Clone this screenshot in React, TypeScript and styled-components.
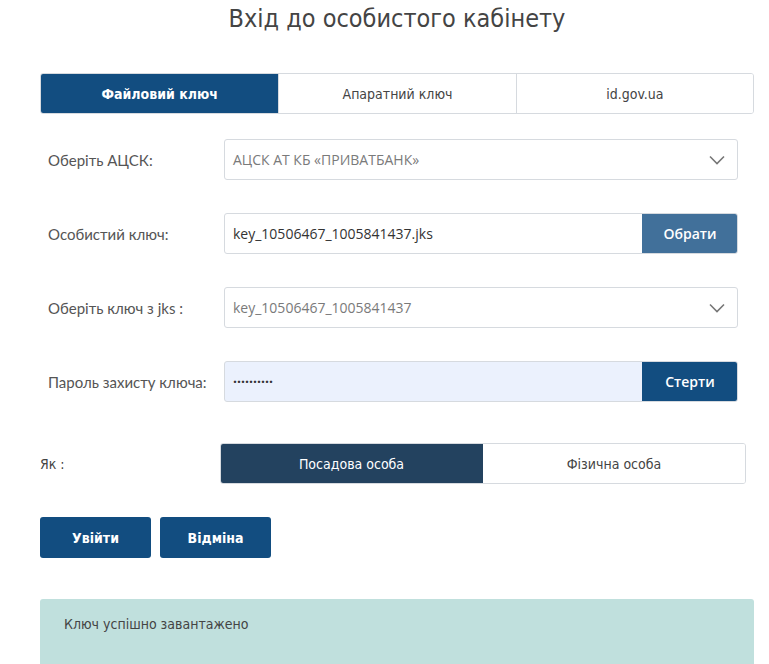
import React, { useState } from "react";
import styled, { createGlobalStyle } from "styled-components";

const condensed = `"Liberation Sans Narrow", "DejaVu Sans Condensed", "DejaVu Sans", sans-serif`;
const labelFont = `Lato, "Noto Sans", sans-serif`;
const inputFont = `"Open Sans", "Noto Sans", sans-serif`;

const GlobalStyle = createGlobalStyle`
  body {
    margin: 0;
    background: #fff;
    font-family: ${labelFont};
  }
`;

const Page = styled.div`
  width: 714px;
  padding: 0 15px 0 40px;
`;

const Title = styled.h1`
  margin: 0;
  padding-top: 4px;
  height: 69px;
  text-align: center;
  font-family: ${condensed};
  font-stretch: condensed;
  font-weight: 400;
  font-size: 25px;
  color: #444;
`;

const Tabs = styled.div`
  display: grid;
  grid-template-columns: repeat(3, 1fr);
  height: 41px;
  border: 1px solid #d6dadf;
  border-radius: 3px;
  box-sizing: border-box;
  overflow: hidden;
`;

const Tab = styled.button<{ $active?: boolean }>`
  border: none;
  border-left: 1px solid #d6dadf;
  &:first-child {
    border-left: none;
  }
  background: ${(p) => (p.$active ? "#124d80" : "#fff")};
  color: ${(p) => (p.$active ? "#fff" : "#444")};
  font-family: ${condensed};
  font-stretch: condensed;
  font-weight: ${(p) => (p.$active ? 700 : 400)};
  font-size: 14px;
  padding: 0;
`;

const Form = styled.div`
  display: flex;
  flex-direction: column;
  gap: 33px;
  padding: 25px 16px 0 8px;
`;

const Row = styled.div`
  display: flex;
  align-items: center;
`;

const Label = styled.div`
  width: 176px;
  flex-shrink: 0;
  font-family: ${labelFont};
  font-size: 15px;
  color: #555;
`;

const Field = styled.div<{ $fill?: boolean }>`
  flex: 1;
  display: flex;
  height: 41px;
  box-sizing: border-box;
  border: 1px solid #d6dadf;
  border-radius: 3px;
  overflow: hidden;
  background: ${(p) => (p.$fill ? "#ebf1fd" : "#fff")};
`;

const Value = styled.div<{ $muted?: boolean; $dots?: boolean }>`
  flex: 1;
  display: flex;
  align-items: center;
  padding-left: 8px;
  font-family: ${inputFont};
  font-size: 14px;
  color: ${(p) => (p.$muted ? "#7a7a7a" : "#333")};
  font-weight: ${(p) => (p.$dots ? 700 : 400)};
`;

const Caret = styled.div`
  width: 40px;
  display: flex;
  align-items: center;
  justify-content: center;
`;

const SideButton = styled.button<{ $light?: boolean }>`
  width: 96px;
  margin: -1px -1px -1px 0;
  border: none;
  background: ${(p) => (p.$light ? "#41709a" : "#124d80")};
  color: #fff;
  font-family: ${inputFont};
  font-size: 14px;
  font-weight: 600;
`;

const RoleRow = styled.div`
  display: flex;
  align-items: center;
  margin-top: 41px;
  padding-right: 8px;
`;

const RoleLabel = styled.div`
  width: 180px;
  font-family: ${condensed};
  font-stretch: condensed;
  font-size: 14px;
  color: #444;
`;

const Toggle = styled.div`
  flex: 1;
  display: grid;
  grid-template-columns: 262px 1fr;
  height: 41px;
  box-sizing: border-box;
  border: 1px solid #d6dadf;
  border-radius: 3px;
  overflow: hidden;
`;

const ToggleOption = styled.button<{ $active?: boolean }>`
  border: none;
  margin: ${(p) => (p.$active ? "-1px 0 -1px -1px" : "0")};
  background: ${(p) => (p.$active ? "#23425f" : "#fff")};
  color: ${(p) => (p.$active ? "#fff" : "#444")};
  font-family: ${condensed};
  font-stretch: condensed;
  font-size: 14px;
  padding: 0;
`;

const Actions = styled.div`
  display: flex;
  gap: 9px;
  margin-top: 33px;
`;

const ActionButton = styled.button`
  width: 111px;
  height: 41px;
  border: none;
  border-radius: 3px;
  background: #124d80;
  color: #fff;
  font-family: ${condensed};
  font-stretch: condensed;
  font-weight: 700;
  font-size: 14px;
`;

const Alert = styled.div`
  margin-top: 41px;
  height: 66px;
  border-radius: 3px 3px 0 0;
  background: #c0e0dd;
  padding: 17px 24px 0;
  box-sizing: border-box;
  font-family: ${condensed};
  font-stretch: condensed;
  font-size: 14px;
  color: #444;
`;

const Chevron = () => (
  <svg width="16" height="10" viewBox="0 0 16 10" fill="none">
    <path d="M1 1.5l7 7 7-7" stroke="#777" strokeWidth="1.6" />
  </svg>
);

const tabs = ["Файловий ключ", "Апаратний ключ", "id.gov.ua"];

const App = () => {
  const [tab, setTab] = useState(0);
  const [role, setRole] = useState(0);

  return (
    <Page>
      <GlobalStyle />
      <Title>Вхід до особистого кабінету</Title>
      <Tabs>
        {tabs.map((t, i) => (
          <Tab key={t} $active={tab === i} onClick={() => setTab(i)}>
            {t}
          </Tab>
        ))}
      </Tabs>
      <Form>
        <Row>
          <Label>Оберіть АЦСК:</Label>
          <Field>
            <Value $muted>АЦСК АТ КБ «ПРИВАТБАНК»</Value>
            <Caret>
              <Chevron />
            </Caret>
          </Field>
        </Row>
        <Row>
          <Label>Особистий ключ:</Label>
          <Field>
            <Value>key_10506467_1005841437.jks</Value>
            <SideButton $light>Обрати</SideButton>
          </Field>
        </Row>
        <Row>
          <Label>Оберіть ключ з jks :</Label>
          <Field>
            <Value $muted>key_10506467_1005841437</Value>
            <Caret>
              <Chevron />
            </Caret>
          </Field>
        </Row>
        <Row>
          <Label>Пароль захисту ключа:</Label>
          <Field $fill>
            <Value $dots>··········</Value>
            <SideButton>Стерти</SideButton>
          </Field>
        </Row>
      </Form>
      <RoleRow>
        <RoleLabel>Як :</RoleLabel>
        <Toggle>
          <ToggleOption $active={role === 0} onClick={() => setRole(0)}>
            Посадова особа
          </ToggleOption>
          <ToggleOption $active={role === 1} onClick={() => setRole(1)}>
            Фізична особа
          </ToggleOption>
        </Toggle>
      </RoleRow>
      <Actions>
        <ActionButton>Увійти</ActionButton>
        <ActionButton>Відміна</ActionButton>
      </Actions>
      <Alert>Ключ успішно завантажено</Alert>
    </Page>
  );
};

export default App;
